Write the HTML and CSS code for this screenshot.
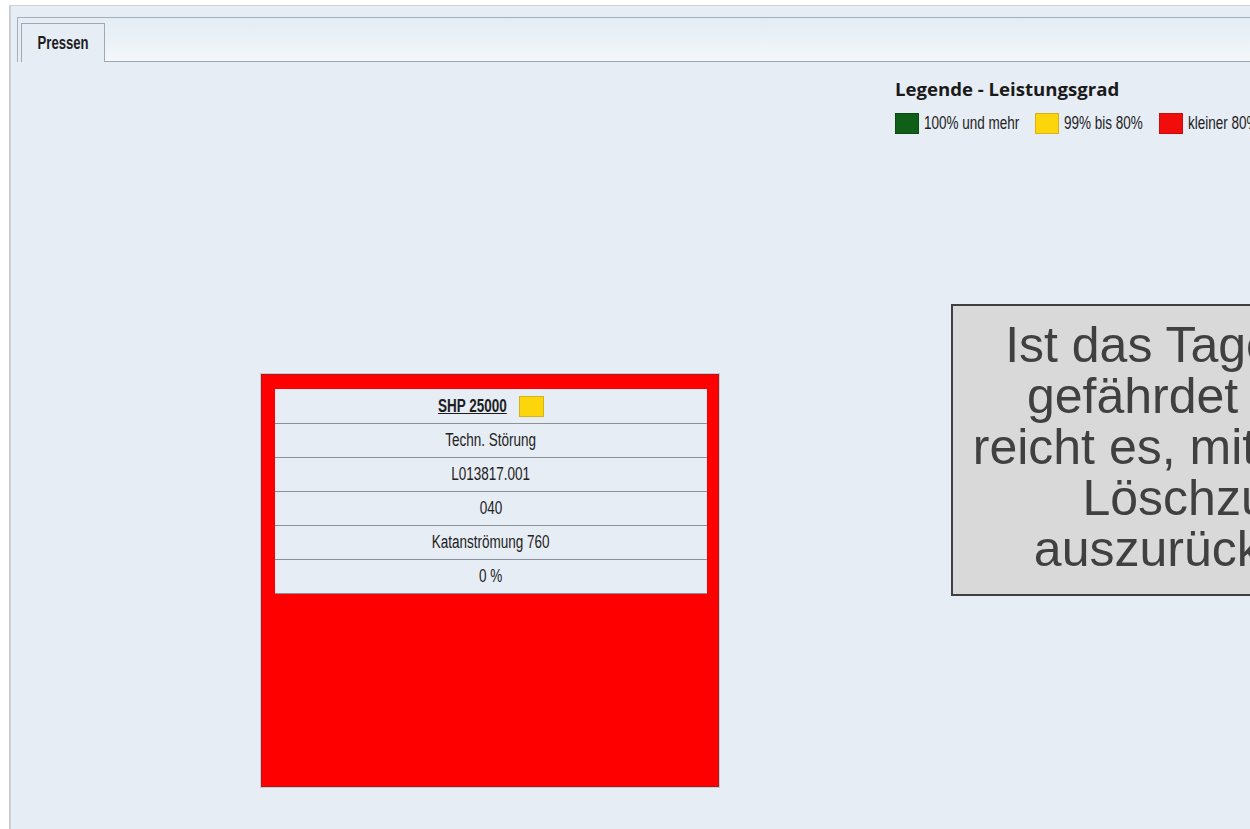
FILE: index.html
```html
<!DOCTYPE html>
<html lang="de">
<head>
<meta charset="utf-8">
<title>Pressen</title>
<link rel="stylesheet" href="styles.css">
</head>
<body>
<div class="frame">
  <div class="tabstrip">
    <div class="tab"><span class="narrow">Pressen</span></div>
    <div class="tab-fill"></div>
  </div>

  <div class="content">
    <div class="legend">
      <div class="legend-title">Legende - Leistungsgrad</div>
      <div class="legend-row">
        <div class="legend-item legend-item-1">
          <span class="swatch swatch-green"></span><span class="legend-label narrow">100% und mehr</span>
        </div>
        <div class="legend-item legend-item-2">
          <span class="swatch swatch-yellow"></span><span class="legend-label narrow">99% bis 80%</span>
        </div>
        <div class="legend-item">
          <span class="swatch swatch-red"></span><span class="legend-label narrow">kleiner 80%</span>
        </div>
      </div>
    </div>

    <div class="stage">
      <div class="press-card">
        <div class="press-table">
          <div class="press-row press-head">
            <a class="press-name narrow">SHP 25000</a>
            <span class="swatch swatch-yellow swatch-small"></span>
          </div>
          <div class="press-row"><span class="narrow">Techn. Störung</span></div>
          <div class="press-row"><span class="narrow">L013817.001</span></div>
          <div class="press-row"><span class="narrow">040</span></div>
          <div class="press-row"><span class="narrow">Katanströmung 760</span></div>
          <div class="press-row"><span class="narrow">0 %</span></div>
        </div>
      </div>
    </div>
  </div>
</div>

<div class="callout">Ist das Tagesziel<br>gefährdet oder<br>reicht es, mit einem<br>Löschzug<br>auszurücken?</div>
</body>
</html>
```

FILE: styles.css
```css
html, body {
  margin: 0;
  padding: 0;
  height: 100%;
  overflow: hidden;
  background: #ffffff;
}

body {
  font-family: "Liberation Sans", Arial, sans-serif;
  color: #222222;
}

/* condensed UI lettering (Arial Narrow look) */
.narrow {
  display: inline-block;
  transform: scaleX(0.75);
  white-space: nowrap;
}

/* outer application frame */
.frame {
  margin: 5px 0 0 9px;
  border-top: 1px solid #cfd3d8;
  border-left: 2px solid #cbcfd4;
  background: #e6edf5;
  height: calc(100% - 6px);
}

/* tab strip */
.tabstrip {
  display: flex;
  margin: 11px 0 0 6px;
  height: 44px;
  border-top: 1px solid #a6aeb9;
  border-left: 1px solid #a6aeb9;
}

.tab {
  margin: 5px 0 0 3px;
  width: 82px;
  border: 1px solid #a0a8b3;
  border-bottom: none;
  background: #e6edf5;
  display: flex;
  align-items: center;
  justify-content: center;
  font-weight: bold;
  font-size: 17.5px;
  color: #1e1e1e;
}

.tab-fill {
  flex: 1;
  background: linear-gradient(#e2edf4, #f4f6f9);
  border-bottom: 1px solid #9ea6b1;
}

/* legend */
.legend {
  margin: 15px 0 0 884px;
}

.legend-title {
  font-family: "Open Sans", "Liberation Sans", sans-serif;
  font-weight: 700;
  font-size: 18.6px;
  line-height: 24px;
  color: #1a1a1a;
  white-space: nowrap;
}

.legend-row {
  display: flex;
  align-items: center;
  margin-top: 12px;
  white-space: nowrap;
}

.legend-item {
  display: flex;
  align-items: center;
  flex-shrink: 0;
}

.legend-item-1 {
  width: 140px;
}

.legend-item-2 {
  width: 124px;
}

.legend-label {
  font-size: 18px;
  margin-left: 5px;
  transform-origin: 0 50%;
  color: #222222;
}

.swatch {
  display: inline-block;
  flex-shrink: 0;
  box-sizing: border-box;
  width: 24px;
  height: 21px;
  border: 1px solid transparent;
}

.swatch-green {
  background: #0f5f18;
  border-color: #0b4a12;
}

.swatch-yellow {
  background: #fdd50b;
  border-color: #d6b21a;
}

.swatch-red {
  background: #f20d0d;
  border-color: #c90c0c;
}

/* press overview */
.stage {
  margin: 240px 0 0 250px;
}

.press-card {
  width: 432px;
  height: 397px;
  padding: 14px 11px 0 13px;
  background: #ff0000;
  border: 1px solid #b31616;
  box-shadow: 0 0 0 1px #c6cbd3;
}

.press-table {
  background: #e6edf5;
}

.press-row {
  height: 33px;
  border-bottom: 1px solid #8b919b;
  display: flex;
  align-items: center;
  justify-content: center;
  gap: 12px;
  font-size: 18px;
  color: #222222;
}

.press-head {
  height: 34px;
}

.press-name {
  font-weight: bold;
  text-decoration: underline;
  color: #1e1e1e;
  transform-origin: 0 50%;
  margin-right: -23px;
}

.swatch-small {
  width: 25px;
  height: 21px;
}

/* annotation box laid over the page */
.callout {
  position: absolute;
  left: 951px;
  top: 304px;
  width: 473px;
  height: 274px;
  padding-top: 14px;
  border: 2px solid #3f3f3f;
  background: #d9d9d9;
  font-size: 50px;
  line-height: 51px;
  color: #404040;
  text-align: center;
  white-space: nowrap;
}
```
